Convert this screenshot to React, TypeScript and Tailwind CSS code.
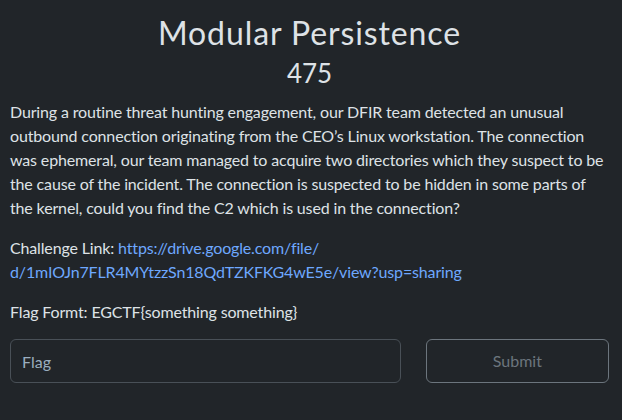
import React from 'react';

const App: React.FC = () => {
  return (
    <div className="min-h-[420px] w-full bg-[#212529] text-[#dee2e6]" style={{ fontFamily: 'Lato, "Open Sans", sans-serif' }}>
      <div className="pl-[10px] pr-[13px] pt-[14px]">
        <h2 className="text-center text-[32px] leading-[38px] font-normal tracking-[0.9px]">Modular Persistence</h2>
        <h3 className="text-center text-[26px] leading-[30px] mt-[6px]">475</h3>

        <p className="mt-[12px] text-[16px] leading-[24px] tracking-[-0.15px]">
          During a routine threat hunting engagement, our DFIR team detected an unusual outbound connection originating
          from the CEO’s Linux workstation. The connection was ephemeral, our team managed to acquire two directories
          which they suspect to be the cause of the incident. The connection is suspected to be hidden in some parts of
          the kernel, could you find the C2 which is used in the connection?
        </p>

        <p className="mt-[16px] text-[16px] leading-[24px] tracking-[-0.15px]">
          Challenge Link:{' '}
          <a href="#" className="text-[#6ea8fe]">
            https://drive.google.com/file/ d/1mIOJn7FLR4MYtzzSn18QdTZKFKG4wE5e/view?usp=sharing
          </a>
        </p>

        <p className="mt-[16px] text-[16px] leading-[24px] tracking-[-0.15px]">Flag Formt: EGCTF{'{'}something something{'}'}</p>

        <div className="mt-[15px] flex gap-[25px]">
          <input
            type="text"
            placeholder="Flag"
            className="h-[44px] w-[392px] rounded-[6px] border border-[#495057] bg-[#212529] px-[11px] text-[16px] text-[#dee2e6] placeholder:text-[#9aaebf] outline-none"
          />
          <button className="h-[44px] w-[184px] rounded-[6px] border border-[#6c757d] text-[16px] text-[#6c757d]">
            Submit
          </button>
        </div>
      </div>
    </div>
  );
};

export default App;
